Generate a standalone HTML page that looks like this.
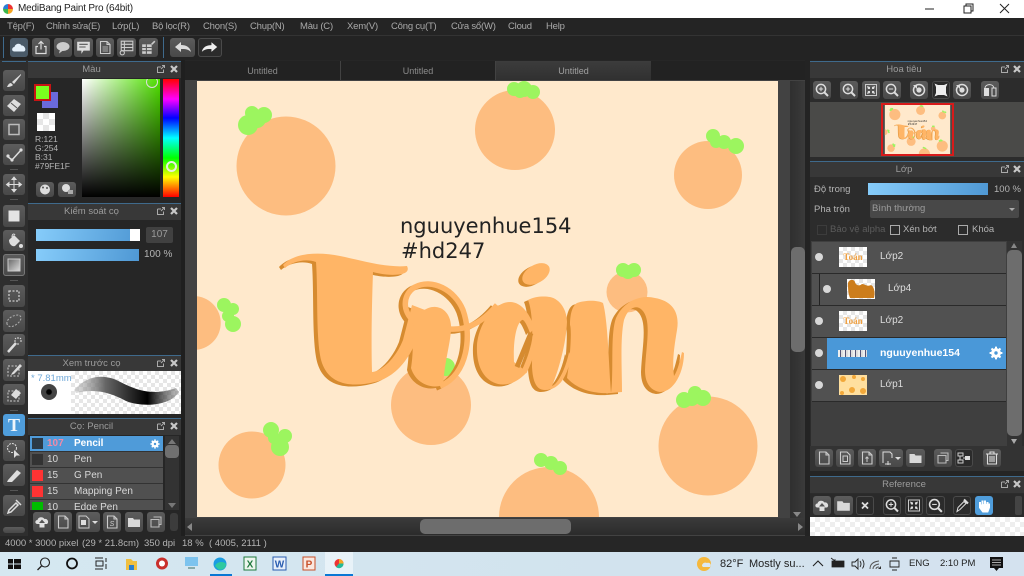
<!DOCTYPE html>
<html><head><meta charset="utf-8"><title>MediBang Paint Pro</title>
<style>
html,body{margin:0;padding:0;width:1024px;height:576px;overflow:hidden;background:#262626}
body{position:relative;font-family:"Liberation Sans","Noto Sans CJK SC",sans-serif;font-size:10px;color:#b4b4b4;filter:blur(.3px)}
.a,.t,.b,.h{position:absolute;display:block}
.t{white-space:pre;line-height:12px}
.m{position:absolute;top:21px;white-space:pre;line-height:12px;font-size:9.5px;letter-spacing:-.2px;color:#aaa}
.b{background:linear-gradient(#5c5c5c,#484848);border-radius:3px}
.d{background:#2b2b2b;box-shadow:inset 0 0 0 1px #4a4a4a}
.b svg{position:absolute;left:0;top:0;width:100%;height:100%}
.h{background:#383838;border-top:1px solid #3f6a8c;text-align:center;color:#9c9c9c;font-size:9.5px;line-height:16px;box-sizing:border-box;padding-right:26px}
.chk{background-color:#fff;background-image:conic-gradient(#e6e6e6 25%,#fff 0 50%,#e6e6e6 0 75%,#fff 0);background-size:8px 8px}
.row{position:absolute;left:812px;width:194px;height:31px;background:#515151;border-bottom:1px solid #2a2a2a}
.dot{position:absolute;width:8px;height:8px;border-radius:50%;background:#d8d8d8}
.br{position:absolute;left:30px;width:133px;height:15px;background:#505050;border-bottom:1px solid #333;color:#d8d8d8;font-size:10px;line-height:15px;overflow:hidden}
.br b{font-weight:normal;position:absolute;left:17px}.br u{text-decoration:none;position:absolute;left:44px}
.br s{position:absolute;left:2px;top:2px;width:11px;height:11px;background:#f33;text-decoration:none}
</style></head><body>
<svg width="0" height="0" style="position:absolute;left:0;top:0;overflow:hidden">
<defs>
<symbol id="pop" viewBox="0 0 10 10"><path d="M1.5 3H5M1.5 3V8.5H7.5V5.5M5 5L8.5 1.5M6 1.5H8.5V4" fill="none" stroke="#aaa" stroke-width="1"/></symbol>
<symbol id="x" viewBox="0 0 10 10"><path d="M2 2L8 8M8 2L2 8" stroke="#c8c8c8" stroke-width="2.2"/></symbol>
<symbol id="page" viewBox="0 0 18 18"><path d="M4.5 3H11L14 6V15H4.5Z M11 3V6H14" fill="none" stroke="#ccc" stroke-width="1.1"/></symbol>
<symbol id="pageS" viewBox="0 0 18 18"><path d="M4.5 3H11L14 6V15H4.5Z" fill="none" stroke="#ccc" stroke-width="1.1"/><path d="M7 7H11.5V12.5H7Z" fill="none" stroke="#ccc"/></symbol>
<symbol id="folder" viewBox="0 0 18 18"><path d="M3 5H8L9 6.5H15V14H3Z" fill="#d8d8d8"/></symbol>
<symbol id="copy" viewBox="0 0 18 18"><path d="M6.5 4H14V11.5H12M4 6.5H12V14H4Z" fill="none" stroke="#bbb" stroke-width="1.1"/></symbol>
<symbol id="up" viewBox="0 0 18 18"><path d="M4 11C1.5 10.5 2 7 4.5 7C5 4 9.5 3 11.5 6C14.5 5 16.5 9.5 14 11H11.5V14.5H6.5V11Z" fill="#e0e0e0"/><path d="M9 6.5L6 10H12Z" fill="#555"/></symbol>
<symbol id="zi" viewBox="0 0 18 18"><circle cx="8" cy="8" r="4.6" fill="none" stroke="#ddd" stroke-width="1.5"/><path d="M11.5 11.5L15 15" stroke="#ddd" stroke-width="2"/><path d="M5.8 8H10.2M8 5.8V10.2" stroke="#ddd"/></symbol>
<symbol id="zo" viewBox="0 0 18 18"><circle cx="8" cy="8" r="4.6" fill="none" stroke="#ddd" stroke-width="1.5"/><path d="M11.5 11.5L15 15" stroke="#ddd" stroke-width="2"/><path d="M5.8 8H10.2" stroke="#ddd"/></symbol>
<symbol id="fit" viewBox="0 0 18 18"><path d="M3.5 3.5H14.5V14.5H3.5Z" fill="none" stroke="#ccc"/><path d="M5 5L8 6V8H6ZM13 5L12 8H10V6ZM5 13L6 10H8V12ZM13 13L10 12V10H12Z" fill="#ddd"/></symbol>
<symbol id="rot" viewBox="0 0 18 18"><circle cx="9" cy="9" r="5.5" fill="none" stroke="#ddd" stroke-width="1.5"/><circle cx="9" cy="9" r="2.6" fill="#ddd"/><path d="M3 4H7V8Z" fill="#ddd"/></symbol>
<symbol id="gear" viewBox="0 0 14 14"><circle cx="7" cy="7" r="3.6" fill="none" stroke="#fff" stroke-width="2.6"/><path d="M7 .6V13.4M.6 7H13.4M2.5 2.5L11.5 11.5M11.5 2.5L2.5 11.5" stroke="#fff" stroke-width="2"/><circle cx="7" cy="7" r="1.7" fill="#4a98d8"/></symbol>
<g id="let">
<g fill="currentColor">
<path d="M283 265C295 252 320 252 340 256C360 260 385 268 407 266Q410 272 402 274C392 276 380 274 373 272C372 300 371 340 372 372C380 372 395 360 403 340L412 305L425 310C420 340 405 375 375 382C350 388 325 385 320 355C316 330 318 290 316 262C305 258 292 262 285 268Z"/>
<path d="M414 325C418 312 428 306 436 307C446 308 452 318 451 330C450 345 445 360 443 385C430 390 415 382 411 368C414 350 412 338 414 325Z"/>
<path d="M477 345C479 322 495 302 510 302C522 302 530 315 535 328L530 333C527 325 524 319 522 320C516 324 513 342 514 362L527 372C518 382 508 386 498 384C483 380 476 365 477 345Z"/>
<path d="M528 300C535 296 545 296 550 297C560 299 567 310 567 322C566 345 558 372 552 386C558 384 566 368 569 352L571 356C568 375 560 390 545 390C538 390 533 385 532 367C532 345 534 315 528 300Z"/>
<path d="M577 303C585 300 598 300 603 303C608 320 609 370 611 393C595 394 578 390 567 378C570 360 572 330 570 325C570 315 572 306 577 303Z"/>
<path d="M611 393C614 370 610 335 616 318C623 302 640 294 655 298C672 301 680 312 677 330C674 348 672 362 674 376C678 370 680 360 682 352L684 353C684 372 674 392 660 392C652 391 645 385 645 370C646 345 652 320 642 310C636 304 628 308 624 320C620 338 622 370 622 392Z"/>
<ellipse cx="536" cy="274" rx="15" ry="9" transform="rotate(-30 536 274)"/>
</g>
<g fill="none" stroke="currentColor" stroke-width="5.500">
<path d="M416 322C404 316 400 296 415 287C432 278 455 290 463 310C472 335 468 375 440 386"/>
<path d="M450 329C465 330 480 325 497 305"/>
<path d="M524 372C530 360 536 342 536 328"/>
</g>
</g>
<symbol id="art" viewBox="197 81 581 436">
<rect x="197" y="81" width="581" height="436" fill="#ffe9cc"/>
<g fill="#fdbd80">
<circle cx="286" cy="166" r="49.5"/><circle cx="515" cy="130" r="40"/><circle cx="708" cy="175" r="34"/>
<path d="M197 296.200A27 27 0 0 1 197 349.800Z"/>
<circle cx="627" cy="292" r="20.5"/><circle cx="431" cy="405" r="40"/><circle cx="708" cy="446" r="49.5"/><circle cx="252" cy="465" r="33.5"/>
<path d="M499 517A50 50 0 0 1 599 517Z"/>
</g>
<g fill="#9cf55f">
<circle cx="248" cy="125" r="10"/><circle cx="252" cy="113" r="7"/><circle cx="264" cy="115" r="8"/><circle cx="257" cy="119" r="9"/>
<circle cx="514" cy="89" r="7"/><circle cx="524" cy="89" r="8"/><circle cx="533" cy="92" r="7"/><circle cx="520" cy="92" r="6"/>
<circle cx="713" cy="136" r="7"/><circle cx="724" cy="142" r="7"/><circle cx="736" cy="146" r="8"/><circle cx="716" cy="142" r="6"/>
<circle cx="224" cy="305" r="7"/><circle cx="233" cy="309" r="6"/><circle cx="228" cy="316" r="6"/><circle cx="233" cy="324" r="8"/>
<circle cx="623" cy="270" r="7"/><circle cx="634" cy="270" r="7"/><circle cx="628" cy="272" r="7"/>
<circle cx="684" cy="400" r="8"/><circle cx="695" cy="393" r="7"/><circle cx="703" cy="398" r="8"/><circle cx="692" cy="399" r="7"/>
<circle cx="271" cy="430" r="8"/><circle cx="285" cy="436" r="7"/><circle cx="280" cy="447" r="9"/><circle cx="274" cy="438" r="6"/>
<circle cx="541" cy="460" r="7"/><circle cx="551" cy="463" r="7"/><circle cx="560" cy="468" r="7"/>
<circle cx="446" cy="367" r="9"/>
</g>
<use href="#let" color="#d68b30" transform="translate(-4,2)"/>
<use href="#let" color="#ffb566"/>
<path d="M517 367L531 333" stroke="#d68b30" stroke-width="5"/>
<text x="400" y="233" font-family="DejaVu Sans,sans-serif" font-size="21" fill="#222">nguuyenhue154</text>
<text x="401" y="258" font-family="DejaVu Sans,sans-serif" font-size="21" fill="#222">#hd247</text>
</symbol>
</defs></svg>

<!-- title bar -->
<div class="a" style="left:0;top:0;width:1024px;height:18px;background:#fff"></div>
<div class="a" style="left:3px;top:4px;width:10px;height:10px;border-radius:50%;background:conic-gradient(#e33 0 25%,#f5a623 0 50%,#3bb54a 0 75%,#2b7fd6 0)"></div>
<span class="t" style="left:18px;top:3px;color:#222;font-size:10px;letter-spacing:-.2px">MediBang Paint Pro (64bit)</span>
<svg class="a" style="left:920px;top:0" width="104" height="18" fill="none" stroke="#222"><path d="M5 9H14"/><path d="M44 6H51V13H44ZM46 6V4H53V11H51"/><path d="M80 4L89 13M89 4L80 13"/></svg>

<!-- menu -->
<div class="a" style="left:0;top:18px;width:1024px;height:17px;background:#242424"></div>
<span class="m" style="left:7px">Tệp(F)</span><span class="m" style="left:46px">Chỉnh sửa(E)</span><span class="m" style="left:112px">Lớp(L)</span><span class="m" style="left:152px">Bộ lọc(R)</span><span class="m" style="left:203px">Chọn(S)</span><span class="m" style="left:250px">Chụp(N)</span><span class="m" style="left:300px">Màu (C)</span><span class="m" style="left:347px">Xem(V)</span><span class="m" style="left:391px">Công cụ(T)</span><span class="m" style="left:451px">Cửa sổ(W)</span><span class="m" style="left:508px">Cloud</span><span class="m" style="left:546px">Help</span>

<!-- toolbar -->
<div class="a" style="left:0;top:35px;width:1024px;height:25px;background:#232323;border-top:1px solid #333;box-sizing:border-box"></div>
<div class="a" style="left:3px;top:37px;width:1px;height:21px;background:#3f6a8c"></div>
<div class="a" style="left:163px;top:37px;width:1px;height:21px;background:#3f6a8c"></div>
<i class="b" style="left:10px;top:38px;width:18px;height:19px;background:#4a5a68"><svg viewBox="0 0 18 18"><path d="M4 13C1 12.500 2 8.500 4.500 8.500C5 5 10 4 11.500 7C14.500 6.500 17 12 14 13Z" fill="#e4f0fa"/></svg></i>
<i class="b" style="left:32px;top:38px;width:18px;height:19px"><svg viewBox="0 0 18 18"><path d="M6 8H4V15H14V8H12M9 11V3M6.500 5.500L9 3L11.500 5.500" fill="none" stroke="#ddd" stroke-width="1.200"/></svg></i>
<i class="b" style="left:54px;top:38px;width:18px;height:19px"><svg viewBox="0 0 18 18"><ellipse cx="9" cy="8" rx="6.500" ry="4.500" fill="#ccc"/><path d="M6 11L5 15L9 12Z" fill="#ccc"/></svg></i>
<i class="b" style="left:74px;top:38px;width:19px;height:19px"><svg viewBox="0 0 18 18"><path d="M3 3.500H15V12H9L7 15V12H3Z" fill="#ddd"/><path d="M5 6H13M5 8.500H11" stroke="#555"/></svg></i>
<i class="b" style="left:96px;top:38px;width:18px;height:19px"><svg viewBox="0 0 18 18"><use href="#page"/><path d="M6.500 8.500H12M6.500 10.500H12M6.500 12.500H12" stroke="#ccc" stroke-width=".8"/></svg></i>
<i class="b" style="left:117px;top:38px;width:19px;height:19px"><svg viewBox="0 0 18 18"><path d="M4 3H15V12H4ZM4 6H15M4 9H15M7 3V12" fill="none" stroke="#ccc"/><circle cx="5" cy="14" r="2" fill="none" stroke="#ccc"/></svg></i>
<i class="b" style="left:139px;top:38px;width:19px;height:19px"><svg viewBox="0 0 18 18"><path d="M3 6H12V15H3Z" fill="#ccc"/><path d="M3 9H12M3 12H12M7 6V15" stroke="#555"/><path d="M12 6L15 3" stroke="#ccc" stroke-width="1.500"/></svg></i>
<i class="b" style="left:170px;top:38px;width:25px;height:19px"><svg viewBox="0 0 25 19"><path d="M5 9L11 4V7C16 7 20 9 21 14C18 11 15 11 11 11V14Z" fill="#ddd"/></svg></i>
<i class="b d" style="left:198px;top:38px;width:24px;height:19px"><svg viewBox="0 0 25 19"><path d="M20 9L14 4V7C9 7 5 9 4 14C7 11 10 11 14 11V14Z" fill="#eee"/></svg></i>

<!-- left tools -->
<div class="a" style="left:0;top:60px;width:28px;height:476px;background:#2e2e2e"></div>
<div class="a" style="left:2px;top:61px;width:24px;height:1px;background:#3f6a8c"></div>
<i class="b" style="left:3px;top:70px;width:22px;height:21px"><svg viewBox="0 0 22 21"><path d="M18 4L9 12L11 14L18 5ZM8 13C6 13 5 15 4 17C7 17 9 16 10 15Z" fill="#ddd"/></svg></i>
<i class="b" style="left:3px;top:95px;width:22px;height:21px"><svg viewBox="0 0 22 21"><path d="M4 11L11 4L18 9L11 17Z" fill="#ddd"/><path d="M8 8L14 13" stroke="#555"/></svg></i>
<i class="b" style="left:3px;top:119px;width:22px;height:21px"><svg viewBox="0 0 22 21"><rect x="6" y="5.500" width="10" height="10" fill="none" stroke="#bbb" stroke-width="1.500"/></svg></i>
<i class="b" style="left:3px;top:144px;width:22px;height:21px"><svg viewBox="0 0 22 21"><path d="M4 12L9 16L18 6" fill="none" stroke="#ddd" stroke-width="1.500"/><circle cx="5" cy="12" r="1.600" fill="#ddd"/><circle cx="9" cy="16" r="1.600" fill="#ddd"/><circle cx="18" cy="6" r="1.600" fill="#ddd"/></svg></i>
<i class="a" style="left:10px;top:169px;width:8px;height:1px;background:#555"></i>
<i class="b" style="left:3px;top:174px;width:22px;height:21px"><svg viewBox="0 0 22 21"><path d="M11 3V18M3.500 10.500H18.500M11 3L9 5.500H13ZM11 18L9 15.500H13ZM3.500 10.500L6 8.500V12.500ZM18.500 10.500L16 8.500V12.500Z" fill="#ddd" stroke="#ddd"/></svg></i>
<i class="a" style="left:10px;top:199px;width:8px;height:1px;background:#555"></i>
<i class="b" style="left:3px;top:205px;width:22px;height:22px"><svg viewBox="0 0 22 22"><rect x="5.500" y="5.500" width="11" height="11" fill="#e4e4e4"/></svg></i>
<i class="b" style="left:3px;top:230px;width:22px;height:21px"><svg viewBox="0 0 22 21"><path d="M6 10L11 5L17 11L12 16C10 17 6 15 6 10Z" fill="#ddd"/><path d="M9 7C9 4 11 3 12 5" fill="none" stroke="#ddd"/><circle cx="18" cy="16" r="2" fill="#ddd"/></svg></i>
<i class="b" style="left:3px;top:254px;width:22px;height:22px;box-shadow:inset 0 0 0 1px #777"><svg viewBox="0 0 22 22"><defs><linearGradient id="gg" x1="0" y1="0" x2="1" y2="1"><stop offset="0" stop-color="#666"/><stop offset="1" stop-color="#ddd"/></linearGradient></defs><rect x="5" y="5" width="12" height="12" fill="url(#gg)" stroke="#ccc"/></svg></i>
<i class="a" style="left:10px;top:280px;width:8px;height:1px;background:#555"></i>
<i class="b" style="left:3px;top:285px;width:22px;height:22px"><svg viewBox="0 0 22 22"><rect x="6" y="6" width="10" height="10" fill="none" stroke="#ccc" stroke-width="1.300" stroke-dasharray="2 1.500"/></svg></i>
<i class="b" style="left:3px;top:310px;width:22px;height:22px"><svg viewBox="0 0 22 22"><path d="M4 14C3 9 10 5 15 5C20 6 18 11 14 14C10 17 6 18 4 14Z" fill="none" stroke="#aaa" stroke-width="1.100" stroke-dasharray="2 1.500"/></svg></i>
<i class="b" style="left:3px;top:334px;width:22px;height:22px"><svg viewBox="0 0 22 22"><path d="M5 18L13 9" stroke="#ddd" stroke-width="2.500"/><path d="M15 3V5M15 9V11M11 7H13M17 7H19M12 4L13 5M18 4L17 5" stroke="#ddd"/></svg></i>
<i class="b" style="left:3px;top:359px;width:22px;height:22px"><svg viewBox="0 0 22 22"><rect x="5" y="7" width="11" height="10" fill="none" stroke="#ccc" stroke-dasharray="2 1.500"/><path d="M9 14L17 5L19 7L11 15L8 16Z" fill="#ddd"/></svg></i>
<i class="b" style="left:3px;top:384px;width:22px;height:21px"><svg viewBox="0 0 22 21"><rect x="5" y="7" width="11" height="10" fill="none" stroke="#ccc" stroke-dasharray="2 1.500"/><path d="M8 11L13 5L18 9L13 15Z" fill="#ddd"/></svg></i>
<i class="a" style="left:10px;top:410px;width:8px;height:1px;background:#555"></i>
<i class="b" style="left:3px;top:414px;width:22px;height:22px;background:#4f9ddb"><span class="t" style="left:0;width:22px;text-align:center;top:1px;font:bold 18px/20px 'Liberation Serif',serif;color:#f0f6fb;font-style:normal">T</span></i>
<i class="b" style="left:3px;top:440px;width:22px;height:21px"><svg viewBox="0 0 22 21"><circle cx="9" cy="8" r="4.500" fill="none" stroke="#ddd" stroke-dasharray="2 1"/><path d="M11 10L11 18L13.500 15.500L17 15.500Z" fill="#ddd"/></svg></i>
<i class="b" style="left:3px;top:464px;width:22px;height:22px"><svg viewBox="0 0 22 22"><path d="M5 16L14 6L18 9L9 18L4 18Z" fill="#ddd"/></svg></i>
<i class="a" style="left:10px;top:490px;width:8px;height:1px;background:#555"></i>
<i class="b" style="left:3px;top:495px;width:22px;height:21px"><svg viewBox="0 0 22 21"><path d="M6 15L13 8L15 10L8 17L5 18ZM13 5L18 10" fill="none" stroke="#ddd" stroke-width="1.500"/></svg></i>
<i class="b" style="left:3px;top:527px;width:22px;height:6px"></i>

<!-- left panels -->
<div class="a" style="left:28px;top:61px;width:153px;height:475px;background:#262626"></div>
<div class="h" style="left:28px;top:61px;width:153px;height:17px">Màu</div>
<svg class="a" style="left:156px;top:64px" width="10" height="10"><use href="#pop"/></svg><svg class="a" style="left:169px;top:64px" width="10" height="10"><use href="#x"/></svg>
<div class="a" style="left:42px;top:92px;width:16px;height:16px;background:#6a6adc"></div>
<div class="a" style="left:34px;top:84px;width:17px;height:17px;box-sizing:border-box;background:#79fe1f;border:2px solid #c81414"></div>
<div class="a chk" style="left:37px;top:113px;width:18px;height:18px;background-size:12px 12px"></div>
<span class="t" style="left:35px;top:135px;font-size:8.5px;line-height:9px;white-space:pre">R:121
G:254
B:31
#79FE1F</span>
<i class="b" style="left:36px;top:182px;width:18px;height:15px"><svg viewBox="0 0 18 15"><circle cx="9" cy="7.500" r="5" fill="#ddd"/><circle cx="7" cy="5.500" r="1" fill="#555"/><circle cx="11" cy="6" r="1" fill="#555"/></svg></i>
<i class="b" style="left:58px;top:182px;width:18px;height:15px"><svg viewBox="0 0 18 15"><circle cx="8" cy="6" r="4" fill="#ddd"/><rect x="10" y="8" width="5" height="4" fill="#aaa"/></svg></i>
<div class="a" style="left:82px;top:79px;width:78px;height:118px;background:linear-gradient(to bottom,transparent,#000),linear-gradient(to right,#fff,#4fe000)"></div>
<div class="a" style="left:163px;top:79px;width:16px;height:118px;background:linear-gradient(#f00,#f0f 17%,#00f 33%,#0ff 50%,#0f0 67%,#ff0 83%,#f00)"></div>
<div class="a" style="left:146px;top:76px;width:10px;height:10px;border:1.500px solid #ddd;border-radius:50%;clip-path:inset(3px -2px -2px -2px)"></div>
<div class="a" style="left:166px;top:161px;width:7px;height:7px;border:2px solid #e8f0e0;border-radius:50%"></div>

<div class="h" style="left:28px;top:203px;width:153px;height:17px">Kiểm soát cọ</div>
<svg class="a" style="left:156px;top:206px" width="10" height="10"><use href="#pop"/></svg><svg class="a" style="left:169px;top:206px" width="10" height="10"><use href="#x"/></svg>
<div class="a" style="left:36px;top:229px;width:104px;height:12px;background:linear-gradient(100deg,#86ccfa,#4f98d4)"></div>
<div class="a" style="left:130px;top:229px;width:10px;height:12px;background:#fff"></div>
<div class="a" style="left:146px;top:227px;width:27px;height:16px;background:#414141;border-radius:2px;text-align:center;line-height:16px;color:#9c9c9c">107</div>
<div class="a" style="left:36px;top:249px;width:103px;height:12px;background:linear-gradient(100deg,#86ccfa,#4f98d4)"></div>
<span class="t" style="left:144px;top:249px">100 %</span>

<div class="h" style="left:28px;top:355px;width:153px;height:16px">Xem trước cọ</div>
<svg class="a" style="left:156px;top:358px" width="10" height="10"><use href="#pop"/></svg><svg class="a" style="left:169px;top:358px" width="10" height="10"><use href="#x"/></svg>
<div class="a chk" style="left:71px;top:371px;width:110px;height:43px"></div>
<div class="a" style="left:28px;top:371px;width:43px;height:43px;background:#fff"></div>
<span class="t" style="left:31px;top:373px;color:#6fa8d8;font-size:9.5px">* 7.81mm</span>
<div class="a" style="left:41px;top:384px;width:16px;height:16px;border-radius:50%;background:radial-gradient(#000 20%,#444 30%,#444)"></div>
<svg class="a" style="left:71px;top:371px" width="110" height="43"><defs><linearGradient id="bs" x1="0" x2="1"><stop offset="0" stop-color="#aaa" stop-opacity=".35"/><stop offset=".3" stop-color="#666"/><stop offset=".7" stop-color="#000"/><stop offset="1" stop-color="#666" stop-opacity=".4"/></linearGradient></defs><path d="M3 19C15 6 28 3 43 8C55 13 75 28 105 17L108 21C98 36 70 36 55 30C40 22 25 17 5 22Z" fill="url(#bs)"/></svg>

<div class="h" style="left:28px;top:418px;width:153px;height:17px">Cọ: Pencil</div>
<svg class="a" style="left:156px;top:421px" width="10" height="10"><use href="#pop"/></svg><svg class="a" style="left:169px;top:421px" width="10" height="10"><use href="#x"/></svg>
<div class="a" style="left:30px;top:436px;width:133px;height:74px;background:#505050;overflow:hidden"></div>
<div class="br" style="top:436px;background:#4f9bd9;font-weight:bold;color:#fff"><s style="background:#2c3a46"></s><b style="color:#f08aa8;font-weight:bold">107</b><u>Pencil</u></div>
<svg class="a" style="left:150px;top:439px" width="10" height="10"><use href="#gear"/></svg>
<div class="br" style="top:452px"><s style="background:#333"></s><b>10</b><u>Pen</u></div>
<div class="br" style="top:468px"><s></s><b>15</b><u>G Pen</u></div>
<div class="br" style="top:484px"><s></s><b>15</b><u>Mapping Pen</u></div>
<div class="br" style="top:500px;height:10px;border:0"><s style="background:#0b0"></s><b>10</b><u>Edge Pen</u></div>
<div class="a" style="left:165px;top:436px;width:14px;height:74px;background:#333"></div>
<div class="a" style="left:165px;top:445px;width:14px;height:13px;background:#707070;border-radius:4px"></div>
<div class="a" style="left:168px;top:439px;width:0;height:0;border:4px solid transparent;border-bottom:5px solid #777;border-top:0"></div>
<div class="a" style="left:168px;top:503px;width:0;height:0;border:4px solid transparent;border-top:5px solid #777;border-bottom:0"></div>
<i class="b" style="left:33px;top:512px;width:18px;height:20px"><svg viewBox="0 0 18 18"><use href="#up"/></svg></i>
<i class="b" style="left:54px;top:512px;width:18px;height:20px"><svg viewBox="0 0 18 18"><use href="#page"/></svg></i>
<i class="b" style="left:76px;top:512px;width:24px;height:20px"><svg viewBox="0 0 24 18"><path d="M3 3H10L13 6V15H3Z" fill="none" stroke="#ccc"/><rect x="5" y="7" width="5" height="5" fill="#ddd"/><path d="M16 8H22L19 11Z" fill="#ddd"/></svg></i>
<i class="b" style="left:103px;top:512px;width:18px;height:20px"><svg viewBox="0 0 18 18"><use href="#page"/><text x="9" y="13" font-size="7" text-anchor="middle" fill="#ccc" font-family="Liberation Sans">S</text></svg></i>
<i class="b" style="left:125px;top:512px;width:18px;height:20px"><svg viewBox="0 0 18 18"><use href="#folder"/></svg></i>
<i class="b" style="left:147px;top:512px;width:18px;height:20px"><svg viewBox="0 0 18 18"><use href="#copy"/></svg></i>
<i class="b" style="left:170px;top:513px;width:8px;height:18px;background:#3c3c3c"></i>

<!-- canvas region -->
<div class="a" style="left:181px;top:60px;width:4px;height:476px;background:#1f1f1f"></div>
<div class="a" style="left:185px;top:61px;width:625px;height:475px;background:#424242"></div>
<div class="a" style="left:185px;top:61px;width:155px;height:19px;background:#222;color:#8c8c8c;text-align:center;line-height:20px;font-size:9px">Untitled</div>
<div class="a" style="left:341px;top:61px;width:154px;height:19px;background:#222;color:#8c8c8c;text-align:center;line-height:20px;font-size:9px">Untitled</div>
<div class="a" style="left:496px;top:61px;width:155px;height:19px;background:linear-gradient(#3c3c3c,#303030);color:#a0a0a0;text-align:center;line-height:20px;font-size:9px">Untitled</div>
<div class="a" style="left:651px;top:61px;width:159px;height:19px;background:#222"></div>
<svg class="a" style="left:197px;top:81px" width="581" height="436"><use href="#art" width="581" height="436"/></svg>
<div class="a" style="left:790px;top:81px;width:15px;height:437px;background:linear-gradient(to right,#2f2f2f,#3a3a3a)"></div>
<div class="a" style="left:791px;top:247px;width:14px;height:105px;background:#6d6d6d;border-radius:5px"></div>
<div class="a" style="left:793px;top:512px;width:0;height:0;border:4px solid transparent;border-top:5px solid #888;border-bottom:0"></div>
<div class="a" style="left:185px;top:518px;width:620px;height:17px;background:linear-gradient(#3a3a3a,#2b2b2b)"></div>
<div class="a" style="left:420px;top:519px;width:151px;height:15px;background:#6d6d6d;border-radius:5px"></div>
<div class="a" style="left:187px;top:523px;width:0;height:0;border:4px solid transparent;border-right:5px solid #888;border-left:0"></div>
<div class="a" style="left:798px;top:523px;width:0;height:0;border:4px solid transparent;border-left:5px solid #888;border-right:0"></div>
<div class="a" style="left:805px;top:60px;width:5px;height:476px;background:#232323"></div>

<!-- right panels -->
<div class="a" style="left:810px;top:61px;width:214px;height:475px;background:#2c2c2c"></div>
<div class="h" style="left:810px;top:61px;width:214px;height:17px">Hoa tiêu</div>
<svg class="a" style="left:1000px;top:64px" width="10" height="10"><use href="#pop"/></svg><svg class="a" style="left:1012px;top:64px" width="10" height="10"><use href="#x"/></svg>
<i class="b" style="left:813px;top:81px;width:18px;height:18px"><svg viewBox="0 0 18 18"><use href="#zi"/></svg></i>
<i class="b" style="left:840px;top:81px;width:18px;height:18px"><svg viewBox="0 0 18 18"><use href="#zi"/></svg></i>
<i class="b" style="left:862px;top:81px;width:18px;height:18px"><svg viewBox="0 0 18 18"><use href="#fit"/></svg></i>
<i class="b" style="left:883px;top:81px;width:18px;height:18px"><svg viewBox="0 0 18 18"><use href="#zo"/></svg></i>
<i class="b" style="left:910px;top:81px;width:18px;height:18px"><svg viewBox="0 0 18 18"><use href="#rot"/></svg></i>
<i class="b d" style="left:932px;top:81px;width:18px;height:18px"><svg viewBox="0 0 18 18"><rect x="4" y="4" width="10" height="10" fill="#eee"/><path d="M2.500 2.500L6 4V6H4ZM15.500 2.500L14 6H12V4ZM2.500 15.500L4 12H6V14ZM15.500 15.500L12 14V12H14Z" fill="#eee"/></svg></i>
<i class="b" style="left:953px;top:81px;width:18px;height:18px"><svg viewBox="0 0 18 18"><use href="#rot"/></svg></i>
<i class="b" style="left:981px;top:81px;width:18px;height:18px"><svg viewBox="0 0 18 18"><path d="M3 7H8V15H3Z" fill="#ddd"/><path d="M11 7H15V15H11ZM4 7C4 3 12 2 13 7" fill="none" stroke="#ddd"/></svg></i>
<div class="a" style="left:810px;top:102px;width:214px;height:55px;background:#4a4a48"></div>
<svg class="a" style="left:881px;top:103px;box-sizing:border-box;border:2px solid #d81a1a" width="73" height="53"><use href="#art" width="69" height="49"/></svg>

<div class="h" style="left:810px;top:161px;width:214px;height:16px">Lớp</div>
<svg class="a" style="left:1000px;top:164px" width="10" height="10"><use href="#pop"/></svg><svg class="a" style="left:1012px;top:164px" width="10" height="10"><use href="#x"/></svg>
<span class="t" style="left:814px;top:184px;font-size:9.5px">Độ trong</span>
<div class="a" style="left:868px;top:183px;width:120px;height:12px;background:linear-gradient(100deg,#86ccfa,#4f98d4)"></div>
<span class="t" style="left:994px;top:184px;font-size:9.5px">100 %</span>
<span class="t" style="left:814px;top:204px;font-size:9.5px">Pha trộn</span>
<div class="a" style="left:870px;top:200px;width:149px;height:18px;background:#484848;border-radius:2px;line-height:18px;color:#9c9c9c;text-indent:2px;font-size:9.5px">Bình thường</div>
<div class="a" style="left:1009px;top:208px;width:0;height:0;border:3px solid transparent;border-top:3px solid #aaa;border-bottom:0"></div>
<div class="a" style="left:817px;top:225px;width:8px;height:8px;border:1px solid #3c3c3c"></div>
<span class="t" style="left:830px;top:224px;color:#5c5c5c;font-size:9.5px">Bảo vệ alpha</span>
<div class="a" style="left:890px;top:225px;width:8px;height:8px;border:1px solid #aaa"></div>
<span class="t" style="left:903px;top:224px;font-size:9.5px">Xén bớt</span>
<div class="a" style="left:958px;top:225px;width:8px;height:8px;border:1px solid #aaa"></div>
<span class="t" style="left:972px;top:224px;font-size:9.5px">Khóa</span>

<div class="a" style="left:811px;top:241px;width:196px;height:205px;background:#3f3f3f"></div>
<div class="row" style="top:242px"></div><div class="dot" style="left:815px;top:253px"></div>
<div class="a chk" style="left:839px;top:247px;width:28px;height:20px"></div>
<svg class="a" style="left:839px;top:247px" width="28" height="20"><text x="14" y="13" font-size="9" font-weight="bold" fill="#f0a040" text-anchor="middle" font-family="Liberation Serif">Toán</text></svg>
<span class="t" style="left:880px;top:251px;color:#ddd">Lớp2</span>

<div class="row" style="top:274px"></div><div class="a" style="left:819px;top:274px;width:1px;height:31px;background:#222"></div><div class="dot" style="left:823px;top:285px"></div>
<div class="a chk" style="left:847px;top:279px;width:28px;height:20px"></div>
<svg class="a" style="left:847px;top:279px" width="28" height="20"><path d="M1 4C2 0 7 0 8 3C9 7 13 7 15 5C18 5 20 8 24 6C28 8 28 16 27 19H3C1 14 1 9 1 4Z" fill="#cc7d1c"/></svg>
<span class="t" style="left:888px;top:283px;color:#ddd">Lớp4</span>

<div class="row" style="top:306px"></div><div class="dot" style="left:815px;top:317px"></div>
<div class="a chk" style="left:839px;top:311px;width:28px;height:20px"></div>
<svg class="a" style="left:839px;top:311px" width="28" height="20"><text x="14" y="13" font-size="9" font-weight="bold" fill="#f0a040" text-anchor="middle" font-family="Liberation Serif">Toán</text></svg>
<span class="t" style="left:880px;top:315px;color:#ddd">Lớp2</span>

<div class="row" style="top:338px"></div><div class="a" style="left:827px;top:338px;width:179px;height:31px;background:#4a98d8"></div><div class="dot" style="left:815px;top:349px"></div>
<div class="a" style="left:838px;top:350px;width:29px;height:7px;background:repeating-linear-gradient(90deg,#eee 0 2px,#557 2px 3px,#ddd 3px 5px)"></div>
<span class="t" style="left:880px;top:347px;color:#fff;font-weight:bold;font-size:10.500px">nguuyenhue154</span>
<svg class="a" style="left:989px;top:346px" width="14" height="14"><use href="#gear"/></svg>

<div class="row" style="top:370px"></div><div class="dot" style="left:815px;top:381px"></div>
<svg class="a" style="left:839px;top:375px" width="28" height="20"><rect width="28" height="20" fill="#ffdf9e"/><g fill="#f2a83a"><circle cx="4" cy="4" r="3"/><circle cx="15" cy="2" r="2"/><circle cx="24" cy="4" r="2"/><circle cx="13" cy="15" r="3"/><circle cx="24" cy="16" r="3"/><circle cx="3" cy="18" r="2"/></g></svg>
<span class="t" style="left:880px;top:379px;color:#ddd">Lớp1</span>

<div class="a" style="left:1007px;top:241px;width:15px;height:205px;background:#333"></div>
<div class="a" style="left:1007px;top:250px;width:15px;height:186px;background:#6d6d6d;border-radius:5px"></div>
<div class="a" style="left:1011px;top:243px;width:0;height:0;border:3.500px solid transparent;border-bottom:5px solid #888;border-top:0"></div>
<div class="a" style="left:1011px;top:439px;width:0;height:0;border:3.500px solid transparent;border-top:5px solid #aaa;border-bottom:0"></div>

<div class="a" style="left:810px;top:446px;width:214px;height:25px;background:#333"></div>
<i class="b" style="left:815px;top:449px;width:18px;height:18px"><svg viewBox="0 0 18 18"><use href="#page"/></svg></i>
<i class="b" style="left:836px;top:449px;width:18px;height:18px"><svg viewBox="0 0 18 18"><use href="#pageS"/></svg></i>
<i class="b" style="left:858px;top:449px;width:18px;height:18px"><svg viewBox="0 0 18 18"><use href="#page"/><path d="M9 13V8M7.500 9.500L9 8L10.500 9.500" fill="none" stroke="#ccc"/></svg></i>
<i class="b" style="left:879px;top:449px;width:24px;height:18px"><svg viewBox="0 0 24 18"><path d="M4 14V3H11L13 5V9M6 15H12M9 12V16" fill="none" stroke="#ddd"/><path d="M16 8H22L19 11Z" fill="#ddd"/></svg></i>
<i class="b" style="left:906px;top:449px;width:19px;height:18px"><svg viewBox="0 0 18 18"><use href="#folder"/></svg></i>
<i class="b" style="left:934px;top:449px;width:18px;height:18px"><svg viewBox="0 0 18 18"><use href="#copy"/></svg></i>
<i class="b d" style="left:955px;top:449px;width:18px;height:18px"><svg viewBox="0 0 18 18"><path d="M3 4H8V7H3ZM3 11H8V14H3ZM5 7V11M8 9H11" stroke="#ccc" fill="none"/><rect x="10" y="7" width="5" height="4" fill="#ddd"/></svg></i>
<i class="b" style="left:983px;top:449px;width:18px;height:18px"><svg viewBox="0 0 18 18"><path d="M3 5H15M7 5V3H11V5M4.500 5V15H13.500V5M7 7V13M9 7V13M11 7V13" fill="none" stroke="#ddd" stroke-width="1.100"/></svg></i>

<div class="a" style="left:810px;top:471px;width:214px;height:5px;background:#252525"></div>
<div class="h" style="left:810px;top:476px;width:214px;height:17px">Reference</div>
<svg class="a" style="left:1000px;top:479px" width="10" height="10"><use href="#pop"/></svg><svg class="a" style="left:1012px;top:479px" width="10" height="10"><use href="#x"/></svg>
<div class="a" style="left:810px;top:494px;width:214px;height:23px;background:#2a2a2a"></div>
<i class="b" style="left:813px;top:496px;width:18px;height:19px"><svg viewBox="0 0 18 18"><use href="#up"/></svg></i>
<i class="b" style="left:834px;top:496px;width:19px;height:19px"><svg viewBox="0 0 18 18"><use href="#folder"/></svg></i>
<i class="b d" style="left:856px;top:496px;width:18px;height:19px"><svg viewBox="0 0 18 18"><path d="M6 6L12 12M12 6L6 12" stroke="#ddd" stroke-width="1.800"/></svg></i>
<i class="b d" style="left:883px;top:496px;width:18px;height:19px"><svg viewBox="0 0 18 18"><use href="#zi"/></svg></i>
<i class="b d" style="left:905px;top:496px;width:18px;height:19px"><svg viewBox="0 0 18 18"><use href="#fit"/></svg></i>
<i class="b d" style="left:926px;top:496px;width:19px;height:19px"><svg viewBox="0 0 18 18"><use href="#zo"/></svg></i>
<i class="b d" style="left:953px;top:496px;width:18px;height:19px"><svg viewBox="0 0 18 18"><path d="M4 15L5 11L11 5L13 7L7 13Z" fill="none" stroke="#ddd"/><path d="M11 3L15 7" stroke="#ddd" stroke-width="2"/></svg></i>
<i class="b" style="left:975px;top:496px;width:18px;height:19px;background:#4f9ddb"><svg viewBox="0 0 18 18"><path d="M5 9V5.500M7.500 9V4M10 9V4M12.500 9V5.500M5 8V11L8 15H12.500L14 11V7" stroke="#fff" stroke-width="2" fill="#fff"/></svg></i>
<i class="a" style="left:1015px;top:496px;width:7px;height:19px;background:#444;border-radius:2px"></i>
<div class="a" style="left:810px;top:517px;width:214px;height:19px;background-color:#fff;background-image:conic-gradient(#eee 25%,#fff 0 50%,#eee 0 75%,#fff 0);background-size:10px 10px"></div>

<!-- status bar -->
<div class="a" style="left:0;top:536px;width:1024px;height:16px;background:#262626"></div>
<span class="t" style="left:5px;top:538px;font-size:9.500px">4000 * 3000 pixel</span>
<span class="t" style="left:82px;top:538px;font-size:9.500px">(29 * 21.8cm)</span>
<span class="t" style="left:144px;top:538px;font-size:9.500px">350 dpi</span>
<span class="t" style="left:182px;top:538px;font-size:9.500px">18 %</span>
<span class="t" style="left:209px;top:538px;font-size:9.500px">( 4005, 2111 )</span>

<!-- taskbar -->
<div class="a" style="left:0;top:552px;width:1024px;height:24px;background:linear-gradient(90deg,#d5e8f1,#d2e3ee 60%,#d4e2ef)"></div>
<div class="a" style="left:325px;top:552px;width:28px;height:24px;background:#e8f2f8;border-bottom:2px solid #0a78d4;box-sizing:border-box"></div>
<div class="a" style="left:210px;top:574px;width:22px;height:2px;background:#0a78d4"></div>
<svg class="a" style="left:0;top:552px" width="360" height="24">
<path d="M8 7H13V11.500H8ZM14 7H21V11.500H14ZM8 12.500H13V17H8ZM14 12.500H21V17H14Z" fill="#111"/>
<circle cx="45" cy="10.500" r="4.500" fill="none" stroke="#222" stroke-width="1.100"/><path d="M41.500 14L37.500 18" stroke="#222" stroke-width="1.300"/>
<circle cx="72" cy="11.500" r="5" fill="none" stroke="#111" stroke-width="1.800"/>
<path d="M95 6H103M95 17H103M96 9H103V14H96ZM106 6V10M106 12V17" fill="none" stroke="#222"/>
<path d="M126 7H131L133 9H137V18H126Z" fill="#f0c040"/><rect x="129" y="13" width="5" height="5" fill="#2a7fd0"/>
<circle cx="162" cy="11.500" r="6" fill="#c9302c"/><circle cx="162" cy="11.500" r="3" fill="#fff"/>
<path d="M185 5H198V14H185Z" fill="#7cc3ee"/><path d="M188 16H195" stroke="#8aa" stroke-width="2"/>
<circle cx="220" cy="12" r="6.500" fill="#1b9de2"/><path d="M215 14C217 9 224 9 226 12C226 17 221 19 218 17Z" fill="#2fc9a0"/>
<rect x="244" y="5" width="12" height="13" fill="#eef6ee" stroke="#1f7a3e"/><text x="250" y="15.500" font-family="Liberation Sans" font-weight="bold" font-size="10" text-anchor="middle" fill="#1f7a3e">X</text>
<rect x="273" y="5" width="13" height="13" fill="#e8f0fa" stroke="#2a5db0"/><text x="279.500" y="15.500" font-family="Liberation Sans" font-weight="bold" font-size="10" text-anchor="middle" fill="#2a5db0">W</text>
<rect x="303" y="5" width="12" height="13" fill="#fae8e0" stroke="#c8502a"/><text x="309" y="15.500" font-family="Liberation Sans" font-weight="bold" font-size="10" text-anchor="middle" fill="#c8502a">P</text>
<circle cx="339" cy="11.500" r="4.500" fill="#e33"/><path d="M339 11.500L343.500 11.500A4.500 4.500 0 0 1 336 15Z" fill="#2b9"/><path d="M339 11.500V7A4.500 4.500 0 0 1 343.500 11.500Z" fill="#f5a623"/>
</svg>
<svg class="a" style="left:690px;top:552px" width="334" height="24">
<circle cx="14" cy="12" r="7" fill="#f5b83c"/><path d="M12 14C12 11 15 10 17 11C20 10 22 13 20 15H13Z" fill="#dbe8f2"/>
<path d="M123 14L128 9L133 14" fill="none" stroke="#222" stroke-width="1.100"/>
<path d="M142 9H154V15H142ZM145 7V9M141 6L145 9" fill="#222" stroke="#222" stroke-width=".8"/>
<path d="M162 10H165L168 7V17L165 14H162Z M170 9Q172 12 170 15M172.500 7.500Q175.500 12 172.500 16.500" fill="none" stroke="#222" stroke-width=".9"/>
<path d="M180 17Q180 10 189 9M183 17Q183 13 189 12M186 17Q186 15 189 15" fill="none" stroke="#555"/><path d="M188 17H191V14Z" fill="#333"/>
<path d="M200 9H209V15H200ZM202 6H207M202 18H207" fill="none" stroke="#222" stroke-width=".9"/>
<path d="M300 5H313V16H309L306.500 19L304 16H300Z" fill="#111"/><path d="M302 8H311M302 10.500H311M302 13H311" stroke="#ddd" stroke-width=".7"/>
</svg>
<span class="t" style="left:720px;top:558px;color:#222;font-size:11px">82°F</span>
<span class="t" style="left:749px;top:558px;color:#222;font-size:11px">Mostly su...</span>
<span class="t" style="left:909px;top:558px;color:#222;font-size:9.500px">ENG</span>
<span class="t" style="left:940px;top:558px;color:#222;font-size:9.500px">2:10 PM</span>
</body></html>
